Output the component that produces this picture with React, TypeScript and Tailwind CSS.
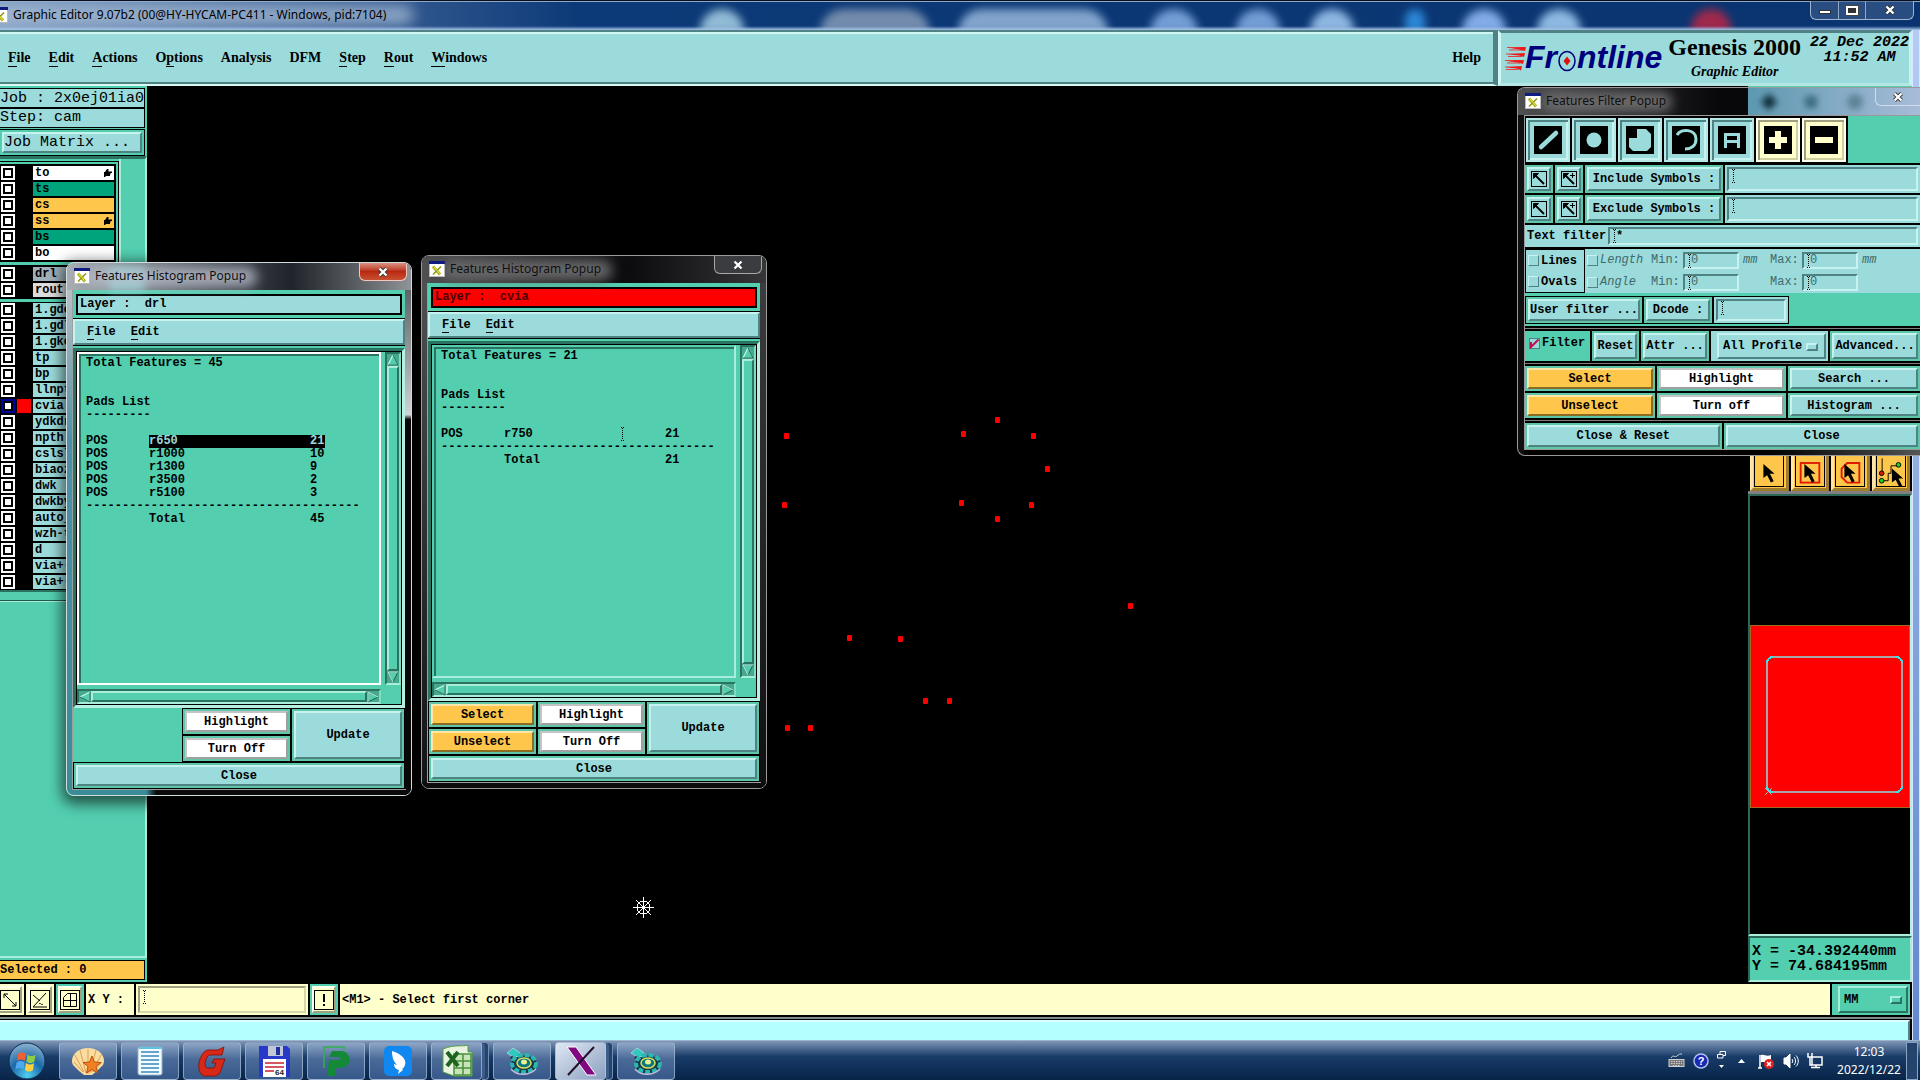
import React from "react";

const MONO = "font-['Liberation_Mono',monospace]";
const SERIF = "font-['Liberation_Serif',serif]";
const UI = "font-['Noto_Sans',sans-serif]";

const RAISED =
  "border-2 border-t-[#c6f2ef] border-l-[#c6f2ef] border-b-[#4f8383] border-r-[#4f8383] bg-[#9bdbdb]";
const SUNKEN =
  "border-2 border-t-[#4f8383] border-l-[#4f8383] border-b-[#c6f2ef] border-r-[#c6f2ef] bg-[#9bdbdb]";
const ORANGE =
  "border-2 border-t-[#ffe6a6] border-l-[#ffe6a6] border-b-[#8c6c22] border-r-[#8c6c22] bg-[#ffc64c]";
const WHITE =
  "border-2 border-t-[#c4c4c4] border-l-[#c4c4c4] border-b-[#a0a0a0] border-r-[#a0a0a0] bg-white";

type Tone = "teal" | "orange" | "white";

function Cell({ tone = "teal", className = "", children }: { tone?: Tone; className?: string; children: React.ReactNode }) {
  const skin = tone === "orange" ? ORANGE : tone === "white" ? WHITE : RAISED;
  return (
    <div className={`flex bg-[#5fc7a9] p-0.5 ${className}`}>
      <button className={`flex min-w-0 flex-1 items-center justify-center whitespace-nowrap text-[12px] leading-none font-bold ${skin}`}>
        {children}
      </button>
    </div>
  );
}

function Caret({ className = "" }: { className?: string }) {
  return (
    <svg className={`pointer-events-none absolute ${className}`} width="5" height="14" viewBox="0 0 5 14" shapeRendering="crispEdges">
      <path d="M2.5 1v12" stroke="#000" strokeDasharray="1 1" />
      <path d="M1 .5h1M3 .5h1M1 13.5h1M3 13.5h1" stroke="#000" />
    </svg>
  );
}

function Field({ label, value = "", className = "", muted = false }: { label: string; value?: string; className?: string; muted?: boolean }) {
  return (
    <div className={`relative flex ${SUNKEN} ${className}`}>
      <input
        aria-label={label}
        defaultValue={value}
        className={`w-full min-w-0 bg-transparent pl-1.5 text-[12px] leading-none outline-none ${muted ? "font-normal text-[#3f6a6a]" : "font-bold"}`}
      />
      <Caret className="top-0 left-0.5" />
    </div>
  );
}

function XIcon() {
  return (
    <svg width="16" height="16" viewBox="0 0 16 16" className="shrink-0">
      <rect x=".5" y=".5" width="15" height="15" fill="#fff" stroke="#bbb" />
      <rect x="0" y="0" width="16" height="3" fill="#111a80" />
      <path d="M4 5.5l7 8" stroke="#b0b010" strokeWidth="3" />
      <path d="M12 5.5l-8 8" stroke="#8a9010" strokeWidth="1.4" />
      <path d="M5 6l5.500 6.500" stroke="#f0f060" strokeWidth="1" />
    </svg>
  );
}

function CloseX() {
  return (
    <svg width="12" height="10" viewBox="0 0 12 10">
      <path d="M2.500 1.500l7 7M9.500 1.500l-7 7" stroke="#333" strokeWidth="4" />
      <path d="M2.500 1.500l7 7M9.500 1.500l-7 7" stroke="#fff" strokeWidth="2.400" />
    </svg>
  );
}

/* ---------- title bar and header ---------- */

const blobs = [
  "left-[700px] w-11 bg-[#9fc8e0]",
  "left-[820px] w-[110px] bg-[#7f95b4]",
  "left-[958px] w-[150px] bg-[#8fb0d6]",
  "left-[1150px] w-12 bg-[#7fa8e0]",
  "left-[1236px] w-11 bg-[#7fa8e0]",
  "left-[1310px] w-11 bg-[#9cc4ee]",
  "left-[1405px] w-5 bg-[#2f8fe0]",
  "left-[1462px] w-11 bg-[#8fb8f4]",
  "left-[1537px] w-11 bg-[#9cc8ee]",
  "left-[1691px] w-10 bg-[#b02848]",
];

function TitleBar() {
  return (
    <div className={`relative flex h-[30px] shrink-0 items-start overflow-hidden border-t border-[#0a0f1c] bg-linear-to-r from-[#7f9dc0] via-[#0c3a78] via-30% to-[#0a3470] ${UI}`}>
      <div className="absolute inset-x-0 top-0 h-px bg-[#8ea8c8]" />
      {blobs.map((b) => (
        <div key={b} className={`absolute top-2 h-6 rounded-t-full opacity-90 blur-[4px] ${b}`} />
      ))}
      <div className="absolute -left-4 top-1 h-5 w-[430px] rounded-full bg-[#a9bdd6] opacity-75 blur-[7px]" />
      <div className="absolute inset-x-0 bottom-0 h-1 bg-linear-to-b from-transparent to-[#a8c4ea]" />
      <div className="relative flex w-full items-start">
        <div className="-ml-2 mt-1.5 flex items-center gap-[5px]">
          <XIcon />
          <span className="text-[12px] leading-4 whitespace-nowrap text-black">Graphic Editor 9.07b2 (00@HY-HYCAM-PC411 - Windows, pid:7104)</span>
        </div>
        <div className="mr-1.5 ml-auto flex h-[19px] divide-x divide-[#8fa6c4] rounded-b-md border border-t-0 border-[#9fb4d0] bg-[#3f5f8c]/60">
          <button aria-label="Minimize" className="flex w-7 items-center justify-center">
            <span className="mt-1 h-1 w-3 border border-[#333] bg-white" />
          </button>
          <button aria-label="Maximize" className="flex w-[27px] items-center justify-center">
            <span className="h-[9px] w-3 border-2 border-white bg-[#333] outline outline-[#444]" />
          </button>
          <button aria-label="Close" className="flex w-[47px] items-center justify-center">
            <CloseX />
          </button>
        </div>
      </div>
    </div>
  );
}

const menus: [string, string, string][] = [
  ["", "F", "ile"],
  ["", "E", "dit"],
  ["", "A", "ctions"],
  ["O", "p", "tions"],
  ["Analysis", "", ""],
  ["DFM", "", ""],
  ["", "S", "tep"],
  ["", "R", "out"],
  ["", "W", "indows"],
];

function FrontlineLogo() {
  return (
    <div className="flex items-center text-[#00007c]">
      <svg width="24" height="26" viewBox="0 0 24 26" className="-mr-1 mt-1">
        <path d="M5 2l16-1-1 4-6-1.500zM3 8.500L20 7l-1 4-5-1.500zM2 15l17-1-1 4-5-1.500zM1 21.500l16-1.500-1 4.500-4-2z" fill="#f01818" />
        <path d="M2 1.500h18M4 4h14M1 8h16M3 10.500h14M0 14.500h16M2 17h13M0 21h14M1 23.500h12" stroke="#f01818" strokeWidth=".8" />
      </svg>
      <span className="flex items-center font-['Liberation_Sans',sans-serif] text-[32px] leading-7 font-bold italic">
        Fr
        <svg width="20" height="22" viewBox="0 0 20 22" className="mt-2" role="img" aria-label="o">
          <ellipse cx="10" cy="11" rx="8" ry="9.500" fill="none" stroke="#00007c" strokeWidth="1.500" />
          <path d="M10 6.500l3.500 4.500-3.500 4.500L6.500 11z" fill="#e01010" />
        </svg>
        ntline
      </span>
    </div>
  );
}

function Header() {
  return (
    <div className="flex h-14 shrink-0">
      <nav className={`flex flex-1 items-center gap-[18px] border-y-2 border-r-[5px] border-t-[#4f8383] border-r-[#4f8383] border-b-[#d8f8f4] bg-[#9bdbdb] pl-2 text-[14px] leading-none font-bold shadow-[inset_0_-2px_0_#4f8383,inset_0_2px_0_#d0f6f3] ${SERIF}`}>
        {menus.map(([a, k, b]) => (
          <button key={a + k + b}>
            {a}
            {k && <span className="border-b border-black pb-px">{k}</span>}
            {b}
          </button>
        ))}
        <button className="mr-3 ml-auto">Help</button>
      </nav>
      <div className="flex w-[414px] border-[3px] border-t-[#4f8383] border-r-[#c6f2ef] border-b-[#b4e6e4] border-l-[#d0f6f3] bg-[#9bdbdb]">
        <div className="ml-1 self-center pb-0.5">
          <FrontlineLogo />
        </div>
        <div className={`ml-1.5 flex flex-col items-center ${SERIF}`}>
          <span className="text-[24px] leading-7 font-bold whitespace-nowrap">Genesis 2000</span>
          <span className="text-[14px] leading-[22px] font-bold whitespace-nowrap italic">Graphic Editor</span>
        </div>
        <div className={`ml-auto flex flex-col items-center pt-0.5 text-[15px] leading-[15px] font-bold whitespace-nowrap italic ${MONO}`}>
          <span>22 Dec 2022</span>
          <span>11:52 AM</span>
        </div>
      </div>
    </div>
  );
}

/* ---------- left layer list ---------- */

type Layer = { name: string; bg: string; hand?: boolean; active?: boolean };
const groups: Layer[][] = [
  [
    { name: "to", bg: "bg-white", hand: true },
    { name: "ts", bg: "bg-[#00a47c]" },
    { name: "cs", bg: "bg-[#ffc64c]" },
    { name: "ss", bg: "bg-[#ffc64c]", hand: true },
    { name: "bs", bg: "bg-[#00a47c]" },
    { name: "bo", bg: "bg-white" },
  ],
  [
    { name: "drl", bg: "bg-[#9fb0b8]" },
    { name: "rout", bg: "bg-[#dcdcdc]" },
  ],
  ["1.gdo", "1.gdl", "1.gko", "tp", "bp", "llnpt", "cvia", "ydkdr", "npth", "cslsl", "biaoz", "dwk", "dwkby", "auto_", "wzh-t", "d", "via+-", "via+-s"].map(
    (name) => ({ name, bg: "bg-[#9bdbdb]", active: name === "cvia" })
  ),
];

function LayerRow({ layer }: { layer: Layer }) {
  return (
    <li className="flex h-4 items-center pl-px">
      <input
        type="checkbox"
        aria-label={layer.name}
        className={`size-3.5 shrink-0 appearance-none border-2 bg-white shadow-[inset_0_0_0_2px_#000] ${layer.active ? "border-[#0000a0]" : "border-white"}`}
      />
      <span className={`mx-0.5 h-3.5 w-3.5 shrink-0 ${layer.active ? "bg-[#ff0000]" : "bg-black"}`} />
      <span className={`flex h-3.5 w-[81px] items-center justify-between overflow-hidden pr-0.5 pl-0.5 text-[12px] leading-none font-bold ${layer.bg}`}>
        {layer.name}
        {layer.hand && (
          <svg width="8" height="8" viewBox="0 0 8 8">
            <path d="M0 3h1l2-3h1.500v2.500H8v1.500H6.500v1.500H6V7H2L1 8H0z" fill="#000" />
          </svg>
        )}
      </span>
    </li>
  );
}

function Sidebar() {
  return (
    <aside className="flex w-[147px] shrink-0 flex-col bg-[#53cfb0]">
      <div className={`flex flex-col text-[15px] leading-[17px] ${MONO}`}>
        <div className="mt-0.5 mr-0.5 border border-l-0 border-black bg-[#9bdbdb] pt-px whitespace-nowrap">Job : 2x0ej01ia0</div>
        <div className="mr-0.5 border border-l-0 border-black bg-[#9bdbdb] pb-px whitespace-nowrap">Step: cam</div>
        <div className="mt-px mr-0.5 flex border border-l-0 border-black p-0.5">
          <button className={`h-[21px] flex-1 text-left leading-none ${RAISED}`}>Job Matrix ...</button>
        </div>
      </div>
      <div className="flex flex-1 flex-col border-t-[3px] border-r-2 border-t-[#2b7361] border-r-[#a9eeda] border-b-2 border-b-[#a9eeda]">
        <div className="w-[121px] border-r-2 border-b-2 border-r-[#a9eeda] border-b-[#2b7361] pt-0.5">
          <div className="border-t border-r border-black pr-0.5 pt-0.5">
            {groups.map((g, i) => (
              <ul key={i} className={i < 2 ? "mb-[3px] bg-black py-px pr-px" : "bg-black pr-px"}>
                {g.map((l) => (
                  <LayerRow key={l.name} layer={l} />
                ))}
              </ul>
            ))}
          </div>
        </div>
        <div className="mt-2 h-px bg-[#1c5a4a]" />
        <div className="h-px bg-[#a9eeda]" />
      </div>
      <div className="mt-0.5 mr-0.5 mb-0.5 border border-l-0 border-black bg-[#ffc64c] text-[12px] leading-[18px] font-bold">Selected : 0</div>
    </aside>
  );
}

/* ---------- drawing canvas ---------- */

const pads = [
  [639, 350], [637, 419], [816, 348], [850, 334], [886, 350], [900, 383], [814, 417], [884, 419],
  [850, 433], [983, 520], [702, 552], [753, 553], [778, 615], [802, 615], [640, 642], [663, 642],
];

function Canvas() {
  return (
    <main className="min-w-0 flex-1 overflow-hidden bg-black">
      <svg width="100%" height="100%">
        {pads.map(([x, y]) => (
          <rect key={`${x}-${y}`} x={x - 2} y={y - 3} width="5" height="6" rx="1" fill="#ff0000" />
        ))}
        <g transform="translate(496 821)" stroke="#fff" fill="none" shapeRendering="crispEdges">
          <path d="M-10 .5h21M.5-10v21M-7-7l15 15M8-7l-15 15" />
          <circle cx=".5" cy=".5" r="6.500" />
        </g>
      </svg>
    </main>
  );
}

function ArrowCursor() {
  return <path d="M10 6v15l4-3 4 8 3-1.500-4-8h5z" fill="#000" />;
}

function RightColumn() {
  const tools = [
    null,
    <rect key="r" x="6" y="5" width="20" height="21" fill="none" stroke="#e01800" strokeWidth="2" />,
    <path key="p" d="M13 5h13v21H13l-6-6V11z" fill="none" stroke="#e01800" strokeWidth="2" />,
    <g key="n" fill="none" stroke="#000">
      <path d="M6.500 0v16M6 24h7v-8h3v-8h8" />
      <circle cx="6" cy="16" r="2.500" fill="#d02000" />
      <circle cx="6" cy="24" r="2.500" fill="#20d020" />
      <circle cx="24" cy="7" r="2.500" fill="#20d020" />
    </g>,
  ];
  return (
    <aside className="flex w-[164px] shrink-0 flex-col">
      <div className="h-[364px] bg-[#53cfb0]" />
      <div className="flex gap-0.5 border-b-[3px] border-[#808080] bg-black px-0.5">
        {tools.map((t, i) => (
          <button key={i} aria-label={`Selection tool ${i + 1}`} className="flex h-[41px] flex-1 items-center justify-center border-[3px] border-t-[#ffe6a6] border-r-[#a07c2c] border-b-[#a07c2c] border-l-[#ffe6a6] bg-[#ffc64c]">
            <svg width="30" height="33" viewBox="0 0 30 33" className="shrink-0 border border-t-0 border-black">
              <g transform="translate(-1 4)">
                {t}
                {i === 3 ? (
                  <g transform="translate(7 5)">
                    <ArrowCursor />
                  </g>
                ) : (
                  <ArrowCursor />
                )}
              </g>
            </svg>
          </button>
        ))}
      </div>
      <div className="flex-1 border-2 border-t-[#2b6656] border-r-[#b5f0e2] border-b-[#a9eeda] border-l-[#2b6656] bg-black">
        <svg width="160" height="100%" shapeRendering="crispEdges">
          <rect x=".5" y="129.500" width="159" height="182" fill="#ff0000" stroke="#a06820" />
          <rect x="17" y="161" width="135" height="135" rx="6" fill="none" stroke="#3fe0e8" strokeWidth="2" />
          <path d="M23 161h123M23 296h123M17 167v123M152 167v123" stroke="#a8a8a8" strokeWidth="2" />
          <path d="M15 292l7 7M22 292l-7 7" stroke="#a8c0c0" />
        </svg>
      </div>
      <div className={`border-2 border-t-[#2b6656] border-r-[#a9eeda] border-b-[#a9eeda] border-l-[#2b6656] bg-[#53cfb0] py-1.5 pl-0.5 text-[15px] leading-[15px] font-bold whitespace-nowrap ${MONO}`}>
        <div>X = -34.392440mm</div>
        <div>Y = 74.684195mm</div>
      </div>
    </aside>
  );
}

/* ---------- command bar ---------- */

function YellowIcon({ label, green = false, children }: { label: string; green?: boolean; children: React.ReactNode }) {
  return (
    <div className={`flex p-0.5 ${green ? "bg-[#53cfb0]" : "bg-[#ffffcc]"}`}>
      <button aria-label={label} className="flex items-center justify-center border-2 border-t-[#fffff0] border-r-[#a0a080] border-b-[#a0a080] border-l-[#fffff0] bg-[#ffffcc]">
        <svg width="20" height="20" viewBox="0 0 20 20" fill="none" stroke="#000">
          <rect x=".5" y=".5" width="19" height="19" />
          {children}
        </svg>
      </button>
    </div>
  );
}

function CommandBar() {
  return (
    <div className={`flex shrink-0 flex-col ${MONO}`}>
      <div className="flex min-h-[35px] gap-0.5 border-y-2 border-black bg-black text-[12px] font-bold">
        <div className="-ml-1 flex">
          <YellowIcon label="Snap line">
            <path d="M4 4l12 12M4 8V4h4M16 12v4h-4" />
          </YellowIcon>
        </div>
        <YellowIcon label="Snap angle">
          <path d="M3 17L16 3M3 5l7 6M3 17h14M9 14c2-2 2 2 4 0" />
        </YellowIcon>
        <YellowIcon label="Grid" green>
          <path d="M3.500 16.500v-9l4-4h9v13zM10.500 3v13M3 10.500h14" />
        </YellowIcon>
        <label htmlFor="xy" className="flex w-12 items-center bg-[#ffffcc] pl-0.5 whitespace-pre">X Y :</label>
        <div className="relative flex w-[172px] bg-[#ffffcc] p-0.5">
          <input id="xy" className="w-full border-2 border-t-[#a0a080] border-r-[#d8d8a8] border-b-[#d8d8a8] border-l-[#a0a080] bg-[#ffffcc] pl-3" />
          <Caret className="top-1.5 left-1.5" />
        </div>
        <YellowIcon label="Message" green>
          <path d="M10 4v8M10 14v2" strokeWidth="2" />
        </YellowIcon>
        <div className="flex flex-1 items-center bg-[#ffffcc] pl-0.5">&lt;M1&gt; - Select first corner</div>
        <div className="mr-0.5 flex bg-[#53cfb0] py-0.5 pr-0.5 pl-1.5">
          <div className="relative flex w-[70px] border-2 border-t-[#a9eeda] border-r-[#2b7361] border-b-[#2b7361] border-l-[#a9eeda]">
            <select aria-label="Units" className="w-full appearance-none pl-1 font-bold">
              <option>MM</option>
            </select>
            <span className="pointer-events-none absolute top-2 right-1 h-2 w-3 border-2 border-t-[#a9eeda] border-r-[#2b7361] border-b-[#2b7361] border-l-[#a9eeda]" />
          </div>
        </div>
      </div>
      <div className="h-0.5 bg-[#7f8c8c]" />
      <div className="h-px bg-black" />
      <div className="mr-0.5 h-5 border-t-2 border-r-2 border-t-[#dcffff] border-r-[#4f8383] bg-[#b4ffff]" />
    </div>
  );
}

/* ---------- popup windows ---------- */

function TriButton({ dir }: { dir: "up" | "down" | "left" | "right" }) {
  const pts = {
    up: "6,1 11,11 1,11",
    down: "1,1 11,1 6,11",
    left: "1,6 11,1 11,11",
    right: "1,1 11,6 1,11",
  }[dir];
  return (
    <button aria-label={`Scroll ${dir}`} className="shrink-0">
      <svg width="12" height="12" viewBox="0 0 12 12">
        <polygon points={pts} fill="#53cfb0" stroke={dir === "down" || dir === "right" ? "#1f5e4e" : "#a9eeda"} />
        <path
          d={{ up: "M6 1L1 11", down: "M11 1H1l5 10", left: "M11 1L1 6", right: "M1 11V1l10 5" }[dir]}
          stroke="#c6f8ea"
          fill="none"
        />
        {(dir === "up" || dir === "left") && <path d={dir === "up" ? "M6 1l5 10H1" : "M11 1v10L1 6"} stroke="#1f5e4e" fill="none" />}
      </svg>
    </button>
  );
}

const GREEN_SUNK = "border-2 border-t-[#2b7361] border-l-[#2b7361] border-b-[#a9eeda] border-r-[#7fdcc4] bg-[#45a98f]";
const THUMB = "border-2 border-t-[#a9eeda] border-l-[#a9eeda] border-b-[#2b7361] border-r-[#2b7361] bg-[#53cfb0]";

type HistRow = { name: string; count: number; selected?: boolean };

function Histogram(props: {
  place: string;
  layer: string;
  layerBg: string;
  rows: HistRow[];
  total: number;
  bright?: boolean;
}) {
  const { place, layer, layerBg, rows, total, bright = false } = props;
  return (
    <section className={`absolute w-[346px] overflow-hidden rounded-lg border ${place} ${bright ? "border-[#d0dce0] shadow-[0_4px_14px_4px_rgba(0,0,0,0.6)]" : "border-[#9a9a9a]"}`}>
      <div
        className={`relative flex h-[27px] items-start ${
          bright ? "bg-linear-to-r from-[#a9aeb4] via-[#20242a] via-65% to-[#909498]" : "bg-linear-to-r from-[#505052] via-[#0c0c0e] via-60% to-[#363638]"
        } ${UI}`}
      >
        {bright && <div className="absolute top-1 left-[42px] h-6 w-9 bg-[#8fe0e0] opacity-80 blur-[4px]" />}
        <div className={`absolute top-1 left-5 h-5 w-[170px] rounded-full blur-[6px] ${bright ? "bg-[#b8bfcc] opacity-80" : "bg-[#68686a]"}`} />
        <div className="relative mt-[5px] ml-[7px] flex items-center gap-[5px]">
          <XIcon />
          <h2 className="text-[12px] leading-4 whitespace-nowrap text-[#101010]">Features Histogram Popup</h2>
        </div>
        <button
          aria-label="Close"
          className={`relative mr-1 ml-auto flex h-[18px] w-12 items-center justify-center rounded-b-md border border-t-0 ${
            bright ? "border-[#f0c8c0] bg-linear-to-b from-[#d89080] via-[#b82810] via-50% to-[#c85030]" : "border-[#a8a8a8] bg-[#3a3c40]"
          }`}
        >
          <CloseX />
        </button>
      </div>
      <div className="flex">
        <div className={`w-1.5 shrink-0 ${bright ? "bg-linear-to-b from-[#b8c0c4] via-[#4c90a8] via-30% to-[#3a8c98]" : "bg-linear-to-b from-[#505052] to-[#141416]"}`} />
        <div className={`min-w-0 flex-1 bg-[#53cfb0] text-[12px] leading-[13px] font-bold ring-1 ring-[#9aa0a0] ${MONO}`}>
          <div className="border-b border-black px-[3px] pt-1 pb-[3px]">
            <div className={`border-2 border-black px-0.5 py-0.5 whitespace-pre ${layerBg}`}>{`Layer :  ${layer}`}</div>
          </div>
          <div className={`flex h-[26px] items-center gap-[15px] px-3 ${RAISED}`}>
            <button>
              <span className="border-b border-black">F</span>ile
            </button>
            <button>
              <span className="border-b border-black">E</span>dit
            </button>
          </div>
          <div className="h-[3px] border-t border-black" />
          <div className="border-[3px] border-t-[#2b7361] border-r-[#b5f0e2] border-b-[#b5f0e2] border-l-[#2b7361]">
            <div className="grid grid-cols-[1fr_16px] grid-rows-[333px_15px] gap-1 border border-black">
              <div className={`border-2 ${bright ? "border-white" : "border-t-[#53cfb0] border-r-[#a9eeda] border-b-[#a9eeda] border-l-[#53cfb0]"}`}>
                <div className="relative h-full overflow-hidden border-t-2 border-l-2 border-[#2b7361] pt-px pl-[5px]">
                  <p>Total Features = {total}</p>
                  <p className="mt-[26px]">Pads List</p>
                  <p className="mb-[13px]">---------</p>
                  <table className="table-fixed border-collapse">
                    <tbody>
                      {rows.map((r) => (
                        <tr key={r.name}>
                          <td className="w-[63px] p-0">POS</td>
                          <td className={`w-[161px] p-0 ${r.selected ? "bg-black text-[#9bdbdb]" : ""}`}>{r.name}</td>
                          <td className={`w-[15px] p-0 ${r.selected ? "bg-black text-[#9bdbdb]" : ""}`}>{r.count}</td>
                        </tr>
                      ))}
                    </tbody>
                  </table>
                  <p className="whitespace-nowrap">--------------------------------------</p>
                  <div className="flex">
                    <span className="ml-[63px] w-[161px]">Total</span>
                    <span>{total}</span>
                  </div>
                  {!bright && <Caret className="top-[78px] left-[184px]" />}
                </div>
              </div>
              <div className={`flex flex-col ${GREEN_SUNK}`}>
                <TriButton dir="up" />
                <div className={`flex-1 ${THUMB}`} />
                <TriButton dir="down" />
              </div>
              <div className={`flex items-center ${GREEN_SUNK}`}>
                <TriButton dir="left" />
                <div className={`h-full flex-1 ${THUMB}`} />
                <TriButton dir="right" />
              </div>
            </div>
          </div>
          <div className="grid auto-rows-[25px] grid-cols-[1fr_1fr_112px] gap-0.5 border border-black bg-black">
            {bright ? <div className="row-span-2 -m-px bg-[#53cfb0]" /> : <Cell tone="orange">Select</Cell>}
            <Cell tone="white">Highlight</Cell>
            <Cell className="row-span-2">Update</Cell>
            {!bright && <Cell tone="orange">Unselect</Cell>}
            <Cell tone="white">Turn Off</Cell>
            <Cell className="col-span-3">Close</Cell>
          </div>
        </div>
        <div className={`w-1.5 shrink-0 ${bright ? "bg-linear-to-b from-[#606468] via-[#d0d4d6] via-25% to-[#080808] to-26%" : "bg-linear-to-b from-[#3c3c3e] to-[#101012]"}`} />
      </div>
      <div className={`h-1.5 ${bright ? "bg-linear-to-r from-[#3a8c98] from-23% to-[#0a0a0a] to-26%" : "bg-[#0c0c0e]"}`} />
    </section>
  );
}

function ToolTile({ label, yellow = false, children }: { label: string; yellow?: boolean; children: React.ReactNode }) {
  return (
    <button
      aria-label={label}
      className={`flex size-11 items-center justify-center border-2 ${
        yellow
          ? "border-[#fffff0] bg-[#ffffcc] shadow-[inset_2px_2px_0_#a0a080,inset_-2px_-2px_0_#d0d0a0]"
          : "border-[#b4e8e6] bg-[#9bdbdb] shadow-[inset_2px_2px_0_#4f8383,inset_-2px_-2px_0_#c6f2ef]"
      }`}
    >
      <svg width="28" height="28" viewBox="0 0 28 28">
        <rect width="28" height="28" fill="#000" />
        {children}
      </svg>
    </button>
  );
}

function PickButton({ plus = false }: { plus?: boolean }) {
  return (
    <Cell className="w-7">
      <svg width="18" height="18" viewBox="0 0 18 18" fill="none" stroke="#000" role="img" aria-label={plus ? "Pick and add" : "Pick"}>
        <rect x="1.500" y="1.500" width="15" height="15" />
        <path d="M5 5l9 9" strokeWidth="1.800" />
        <path d="M3.500 3.500h5l-5 5z" fill="#000" />
        {plus && <path d="M12.500 3v5M10 5.500h5" />}
      </svg>
    </Cell>
  );
}

function Tick({ label, checked = false, className = "", muted = false }: { label: string; checked?: boolean; className?: string; muted?: boolean }) {
  return (
    <label className={`flex items-center gap-0.5 ${className}`}>
      <span className="relative flex">
        <input
          type="checkbox"
          defaultChecked={checked}
          className={`size-[11px] appearance-none border ${
            checked ? "border-[#4f8383] bg-[#9bdbdb]" : "border-t-[#c6f2ef] border-r-[#4f8383] border-b-[#4f8383] border-l-[#c6f2ef]"
          }`}
        />
        {checked && (
          <svg className="pointer-events-none absolute inset-0" width="11" height="11" viewBox="0 0 11 11">
            <path d="M2 4v5L9.500 1.500" fill="none" stroke="#c01050" strokeWidth="2" />
          </svg>
        )}
      </span>
      <span className={muted ? "font-normal text-[#3f6a6a] italic" : ""}>{label}</span>
    </label>
  );
}

function Divider() {
  return <div className="h-[5px] border-y-2 border-black bg-[#808080]" />;
}

function RangeRow({ label, unit }: { label: string; unit: string }) {
  return (
    <div className="flex items-center font-normal text-[#3f6a6a]">
      <Tick label={label} muted className="w-[64px]" />
      <span className="w-8">Min:</span>
      <Field label={`${label} minimum`} value="0" muted className="h-[17px] w-14" />
      <span className="w-[31px] pl-1 italic">{unit}</span>
      <span className="w-8">Max:</span>
      <Field label={`${label} maximum`} value="0" muted className="h-[17px] w-14" />
      <span className="pl-1 italic">{unit}</span>
    </div>
  );
}

function FilterPopup() {
  return (
    <section className="absolute top-[87px] right-0 w-[403px] overflow-hidden rounded-l-lg border border-r-0 border-[#9a9a9a] bg-[#101012]">
      <div className={`relative flex h-[27px] items-start overflow-hidden bg-linear-to-r from-[#505052] via-[#08080a] via-50% to-[#08080a] ${UI}`}>
        <div className="absolute top-1 left-6 h-5 w-[130px] rounded-full bg-[#6a6a6c] blur-[6px]" />
        <div className="absolute inset-y-0 right-0 flex w-[172px] items-center justify-around bg-linear-to-r from-[#5c98b0] to-[#a8bcd8]">
          <span className="size-3 rotate-45 bg-[#12303c] blur-[3px]" />
          <span className="size-3 bg-[#3a6c80] blur-[3px]" />
          <span className="size-4 rounded-full bg-[#5c8498] blur-[3px]" />
          <span className="size-3" />
        </div>
        <div className="relative mt-[5px] ml-[7px] flex items-center gap-[5px]">
          <XIcon />
          <h2 className="text-[12px] leading-4 whitespace-nowrap text-[#101010]">Features Filter Popup</h2>
        </div>
        <button aria-label="Close" className="relative ml-auto flex h-[18px] w-[45px] items-center justify-center rounded-bl-md border-b border-l border-[#d0dcec]">
          <CloseX />
        </button>
      </div>
      <div className={`ml-1.5 border-t border-l border-[#9a9a9a] bg-black text-[12px] leading-[14px] font-bold ${MONO}`}>
        <div className="flex gap-0.5 bg-black pt-0.5 pl-px">
          <ToolTile label="Lines">
            <path d="M7 21L22 7" stroke="#9bdbdb" strokeWidth="4.500" strokeLinecap="round" />
          </ToolTile>
          <ToolTile label="Pads">
            <circle cx="14" cy="14" r="7.500" fill="#9bdbdb" />
          </ToolTile>
          <ToolTile label="Surfaces">
            <path d="M11 3h9l5 5v13l-4 4H7l-4-4v-9h8z" fill="#9bdbdb" />
          </ToolTile>
          <ToolTile label="Arcs">
            <path d="M5 9c4-7 19-6 19 4 0 7-5 10-11 10" fill="none" stroke="#9bdbdb" strokeWidth="3" />
          </ToolTile>
          <ToolTile label="Text">
            <path d="M7.500 22V8.500h13V22M7 15.500h14" fill="none" stroke="#9bdbdb" strokeWidth="3" />
          </ToolTile>
          <ToolTile label="Positive" yellow>
            <path d="M14 5v18M5 14h18" stroke="#ffffcc" strokeWidth="6" />
          </ToolTile>
          <ToolTile label="Negative" yellow>
            <path d="M5 14h18" stroke="#ffffcc" strokeWidth="6" />
          </ToolTile>
          <div className="-mt-0.5 -mb-px flex-1 bg-[#53cfb0]" />
        </div>
        <div className="mt-[3px] flex flex-col gap-0.5">
          {["Include Symbols :", "Exclude Symbols :"].map((t) => (
            <div key={t} className="flex h-7 gap-0.5">
              <PickButton />
              <PickButton plus />
              <Cell className="w-[138px]">{t}</Cell>
              <div className="flex flex-1 bg-[#9bdbdb] p-0.5">
                <Field label={t} className="flex-1" />
              </div>
            </div>
          ))}
          <div className="flex h-[22px] items-center bg-[#9bdbdb] py-0.5 pr-0.5 pl-0.5">
            <span className="w-[81px] whitespace-nowrap">Text filter</span>
            <Field label="Text filter" value="*" className="h-full flex-1" />
          </div>
          <div className="flex h-11 bg-[#9bdbdb]">
            <div className="flex w-[60px] flex-col justify-around border border-black pl-0.5">
              <Tick label="Lines" />
              <Tick label="Ovals" />
            </div>
            <div className="flex flex-col justify-around pl-0.5">
              <RangeRow label="Length" unit="mm" />
              <RangeRow label="Angle" unit="  " />
            </div>
          </div>
        </div>
        <div className="bg-[#53cfb0] pt-[3px] pb-0.5">
          <div className="flex h-7 w-max gap-0.5 border border-black bg-black">
            <Cell className="w-[116px]">User filter ...</Cell>
            <Cell className="w-[68px]">Dcode :</Cell>
            <div className="flex w-[74px] bg-[#9bdbdb] p-0.5">
              <Field label="Dcode" className="flex-1" />
            </div>
          </div>
        </div>
        <Divider />
        <div className="flex h-[30px] gap-0.5">
          <div className="flex w-[65px] bg-[#53cfb0] pt-1 pl-1">
            <Tick label="Filter" checked className="h-4" />
          </div>
          <Cell className="w-[47px]">Reset</Cell>
          <Cell className="w-[68px]">Attr ...</Cell>
          <div className="flex w-[117px] bg-[#9bdbdb] py-0.5 pr-0.5 pl-1.5">
            <div className={`relative flex flex-1 ${RAISED}`}>
              <select aria-label="Profile" className="w-full appearance-none pl-1 font-bold">
                <option>All Profile</option>
              </select>
              <span className={`pointer-events-none absolute top-2 right-1.5 h-2 w-3 ${RAISED}`} />
            </div>
          </div>
          <Cell className="flex-1">Advanced...</Cell>
        </div>
        <Divider />
        <div className="grid auto-rows-[25px] grid-cols-[130px_129px_1fr] gap-0.5">
          <Cell tone="orange">Select</Cell>
          <Cell tone="white">Highlight</Cell>
          <Cell>Search ...</Cell>
          <Cell tone="orange">Unselect</Cell>
          <Cell tone="white">Turn off</Cell>
          <Cell>Histogram ...</Cell>
        </div>
        <Divider />
        <div className="grid auto-rows-[26px] grid-cols-2 gap-0.5">
          <Cell>Close &amp; Reset</Cell>
          <Cell>Close</Cell>
        </div>
      </div>
      <div className="ml-1.5 h-1.5 border-t border-[#9a9a9a] bg-linear-to-r from-black from-50% to-[#555]" />
    </section>
  );
}

/* ---------- taskbar ---------- */

function Gear() {
  return (
    <svg width="34" height="32" viewBox="0 0 34 32">
      <path d="M2 8l6-5 6 4 3 4-9 1z" fill="#30c8c0" stroke="#e0e8e8" strokeWidth=".6" />
      <path d="M6 12l8 6" stroke="#202838" strokeWidth="3" />
      <ellipse cx="19" cy="20" rx="13" ry="9.500" fill="#1a3848" />
      <ellipse cx="19" cy="18.500" rx="12" ry="8.500" fill="none" stroke="#28b8b0" strokeWidth="4" strokeDasharray="5 2" />
      <ellipse cx="19" cy="18" rx="7" ry="5" fill="#0e7880" stroke="#d8e060" strokeWidth="1.500" />
      <ellipse cx="19" cy="17" rx="3" ry="2.500" fill="#e8f090" />
      <path d="M6 24c6 7 18 7 25 0" fill="none" stroke="#c0b8e0" strokeWidth="1.500" />
    </svg>
  );
}

const tasks: { name: string; stacked?: boolean; active?: boolean; icon: React.ReactNode }[] = [
  {
    name: "Shell",
    icon: (
      <svg width="34" height="32" viewBox="0 0 34 32">
        <path d="M13 30l-5-4-6-6C-2 12 6 3 17 3s19 9 15 17l-6 6-5 4z" fill="#f8dca0" />
        <path d="M17 29V4M15 28L9 5M19 28l6-23M13 27L4 10M21 27l9-17M12 27L3 17M22 27l9-10" stroke="#e0a050" fill="none" />
        <path d="M21 11l2.500 6 6.500.5-5 4 2 6.500-6-3.500-5.500 3.500 1.500-6.500-5-4 6.500-.5z" fill="#f08020" stroke="#b85010" />
      </svg>
    ),
  },
  {
    name: "Notepad",
    icon: (
      <svg width="28" height="32" viewBox="0 0 28 32">
        <rect x="2" y="2" width="24" height="28" rx="2" fill="#f4fbff" stroke="#90b8cc" />
        <path d="M5 7h18M5 11h18M5 15h18M5 19h18M5 23h18M5 27h18" stroke="#3888b8" strokeWidth="1.500" />
        <path d="M3 3h22" stroke="#60c0e0" strokeWidth="2" />
      </svg>
    ),
  },
  {
    name: "G",
    icon: (
      <svg width="32" height="32" viewBox="0 0 32 32">
        <path d="M28 2l-2 8H14c-4 0-7 12-3 13h7l2-5h-4l2-4h11l-5 14-4 3H8C-2 27 4 6 12 5h10z" fill="#d82818" stroke="#801008" strokeWidth=".8" />
      </svg>
    ),
  },
  {
    name: "Save",
    icon: (
      <svg width="34" height="34" viewBox="0 0 34 34">
        <path d="M2 2h28l3 3v28H2z" fill="#2838c8" />
        <rect x="11" y="2" width="15" height="10" fill="#c0c8d8" />
        <rect x="19" y="3" width="4" height="8" fill="#2030a0" />
        <rect x="6" y="15" width="23" height="18" fill="#fff" />
        <path d="M8 19h19M8 23h19M8 27h9" stroke="#c82030" strokeWidth="1.500" />
        <text x="18" y="31" fontSize="8" fontFamily="Liberation Sans" fontWeight="700" fill="#222">64</text>
      </svg>
    ),
  },
  {
    name: "P",
    icon: (
      <svg width="32" height="34" viewBox="0 0 32 34">
        <path d="M4 24V3h20v3" stroke="#30b050" fill="none" strokeWidth="1.500" />
        <path d="M12 7h10c11 2 10 17-2 17h-4l-1 8H7l2-16h9c3 0 3-3 0-3H9z" fill="#148a38" />
      </svg>
    ),
  },
  {
    name: "Wing",
    icon: (
      <svg width="30" height="32" viewBox="0 0 30 32">
        <rect x="1" y="1" width="28" height="30" rx="5" fill="#1088f0" />
        <path d="M9 6c10 3 15 9 13 14-1 3-3 4-3 4l1 1-5 4 1-4c-4-1-5-4-5-6l3 1c-4-4-5-9-5-14z" fill="#fff" />
      </svg>
    ),
  },
  {
    name: "Excel",
    stacked: true,
    icon: (
      <svg width="32" height="34" viewBox="0 0 32 34">
        <path d="M2 5C14 0 22 3 27 1v7h4v24H13l-11-4z" fill="#e8f4e0" stroke="#58a040" />
        <path d="M13 10h17v21H13zM13 17h17M13 24h17M22 10v21" fill="#c8e4b8" stroke="#48903c" strokeWidth="1.500" />
        <path d="M6 8l11 14M17 8L6 22" stroke="#1c6420" strokeWidth="4" />
      </svg>
    ),
  },
  { name: "Genesis", icon: <Gear /> },
  {
    name: "X server",
    stacked: true,
    active: true,
    icon: (
      <svg width="34" height="32" viewBox="0 0 34 32">
        <path d="M3 2h9l20 28h-9z" fill="#800880" stroke="#fff" />
        <path d="M30 2L4 30" stroke="#201028" strokeWidth="2" />
      </svg>
    ),
  },
  { name: "Genesis editor", icon: <Gear /> },
];

function Taskbar() {
  return (
    <footer className={`flex h-10 shrink-0 items-center border-t border-[#9db4cc] bg-linear-to-b from-[#7f97b8] via-[#183c68] via-40% to-[#082448] ${UI}`}>
      <button aria-label="Start" className="mr-[13px] ml-2">
        <svg width="38" height="38" viewBox="0 0 38 38">
          <defs>
            <radialGradient id="orb" cx=".5" cy=".9" r=".9">
              <stop offset="0" stopColor="#50d0f0" />
              <stop offset=".5" stopColor="#1c68a8" />
              <stop offset="1" stopColor="#8cb4d0" />
            </radialGradient>
          </defs>
          <circle cx="19" cy="19" r="18" fill="url(#orb)" stroke="#0c2c50" />
          <path d="M10 12c3-2 5-2 8 0l-1 7c-3-2-5-2-8 0z" fill="#f06030" />
          <path d="M19.500 12.500c3 2 5 2 8 0l-1 7c-3 2-5 2-8 0z" fill="#90cc40" />
          <path d="M8.500 20.500c3-2 5-2 8 0l-1 7c-3-2-5-2-8 0z" fill="#50a8f0" />
          <path d="M18 21c3 2 5 2 8 0l-1 7c-3 2-5 2-8 0z" fill="#ffd040" />
        </svg>
      </button>
      <div className="flex gap-1">
        {tasks.map((t) => (
          <div key={t.name} className="flex">
            <button
              aria-label={t.name}
              className={`flex h-[38px] items-center justify-center rounded-sm border border-[#a8bcd4]/70 ${t.stacked ? "w-[51px]" : "w-[58px]"} ${
                t.active ? "bg-linear-to-br from-[#e0e8f4] to-[#8ca0c0]" : "bg-linear-to-b from-[#8ea6c6] via-[#4a6a98] via-45% to-[#36588a]"
              }`}
            >
              {t.icon}
            </button>
            {t.stacked && <span className="h-[38px] w-[7px] rounded-r-sm border-y border-r border-[#8ca4c4]/70 bg-[#3c5c8a] shadow-[inset_-3px_0_0_#24446e]" />}
          </div>
        ))}
      </div>
      <div className="ml-auto flex items-center gap-2 text-white">
        <svg width="17" height="15" viewBox="0 0 17 15" fill="none" stroke="#d0d0d0">
          <path d="M3 5c2-4 4 0 6-2s3-2 5-2" />
          <rect x="1" y="6.500" width="15" height="7" fill="#787878" />
          <path d="M3 8.500h11M3 10.500h11M5 12.500h7" strokeDasharray="1.500 1" />
        </svg>
        <svg width="16" height="16" viewBox="0 0 16 16">
          <circle cx="8" cy="8" r="7" fill="#1828b0" stroke="#b0c0f0" strokeWidth="1.500" />
          <text x="8" y="12" textAnchor="middle" fontSize="11" fontWeight="700" fontFamily="Liberation Sans" fill="#fff">?</text>
        </svg>
        <svg width="9" height="20" viewBox="0 0 9 20" fill="none" stroke="#fff">
          <path d="M3 3V.5h5.500v4H6M.5 3.500H6v3.500H.5z" />
          <path d="M2 14h5l-2.500 3z" fill="#fff" stroke="none" />
        </svg>
        <svg width="7" height="4" viewBox="0 0 9 5" className="ml-1">
          <path d="M0 5l4.500-5L9 5z" fill="#fff" />
        </svg>
        <svg width="18" height="18" viewBox="0 0 18 18" className="ml-1">
          <path d="M3 3v13M1 16h4" stroke="#fff" strokeWidth="1.500" />
          <path d="M4 3c4-1 5 2 10 0v7H4z" fill="#fff" />
          <circle cx="12" cy="12" r="5" fill="#e02020" />
          <path d="M10 10l4 4M14 10l-4 4" stroke="#fff" strokeWidth="1.500" />
        </svg>
        <svg width="16" height="16" viewBox="0 0 16 16" fill="none" stroke="#fff">
          <path d="M1 5h2l4-4v14l-4-4H1z" fill="#fff" />
          <path d="M9 6c1 1 1 3 0 4M11 4c2 2 2 6 0 8M13 2.500c3 3 3 8 0 11" />
        </svg>
        <svg width="17" height="17" viewBox="0 0 17 17" fill="none" stroke="#fff" strokeWidth="1.500">
          <path d="M5 5h10v8H5zM4 15.500h9M9 13v2" />
          <path d="M1 1v4h4V1M3 5v8h2" />
        </svg>
        <div className="w-[74px] text-center text-[12px] leading-[18px]">
          <div>12:03</div>
          <div>2022/12/22</div>
        </div>
        <button aria-label="Show desktop" className="-ml-2 mr-0.5 h-[38px] w-3 border border-[#8ca4c4] bg-[#24446e]" />
      </div>
    </footer>
  );
}

export default function App() {
  return (
    <div className="relative flex h-screen w-full flex-col overflow-hidden bg-black text-black">
      <TitleBar />
      <div className="flex min-h-0 flex-1">
        <div className="flex min-w-0 flex-1 flex-col">
          <Header />
          <div className={`flex min-h-0 flex-1 ${MONO}`}>
            <Sidebar />
            <Canvas />
            <RightColumn />
          </div>
          <CommandBar />
        </div>
        <div className="w-2 shrink-0 border-x border-x-[#d8e8ff] bg-linear-to-b from-[#b4ccf4] to-[#6488cc]" />
      </div>
      <Taskbar />
      <Histogram
        place="left-[66px] top-[262px]"
        layer="drl"
        layerBg="bg-[#9bdbdb]"
        bright
        total={45}
        rows={[
          { name: "r650", count: 21, selected: true },
          { name: "r1000", count: 10 },
          { name: "r1300", count: 9 },
          { name: "r3500", count: 2 },
          { name: "r5100", count: 3 },
        ]}
      />
      <Histogram place="left-[421px] top-[255px]" layer="cvia" layerBg="bg-[#ff0000] text-[#4a0000]" total={21} rows={[{ name: "r750", count: 21 }]} />
      <FilterPopup />
    </div>
  );
}
